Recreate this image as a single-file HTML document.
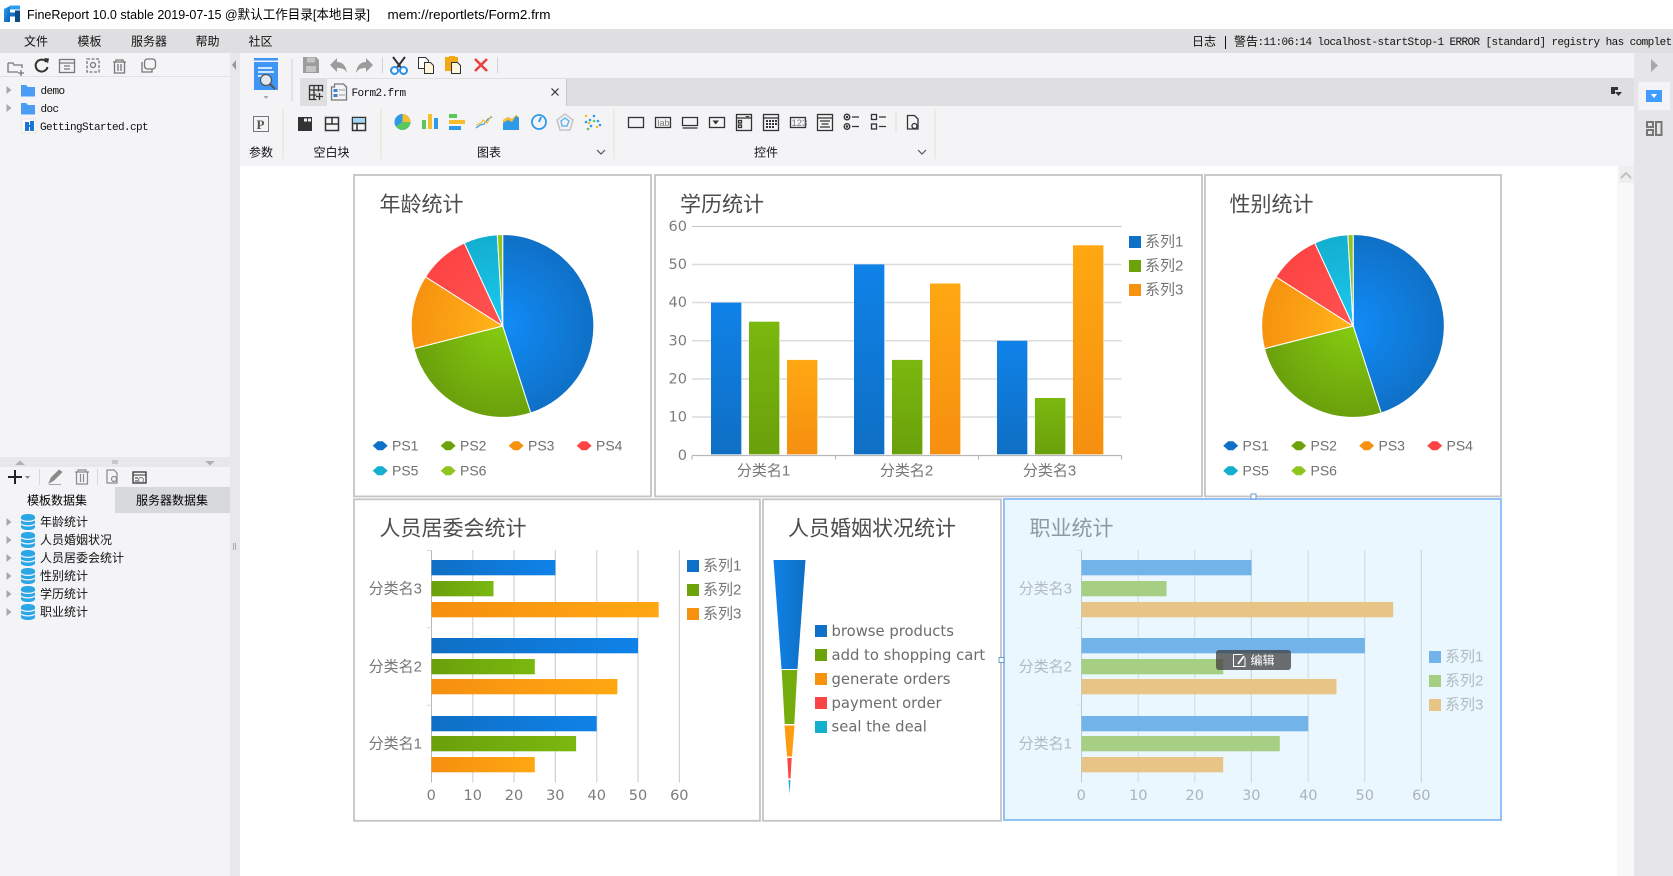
<!DOCTYPE html>
<html lang="zh-CN"><head><meta charset="utf-8"><title>FineReport</title>
<style>
html,body{margin:0;padding:0;width:1673px;height:876px;overflow:hidden;background:#fff}
svg{display:block;position:absolute;left:0;top:0}
text{font-family:"Liberation Sans","Noto Sans CJK SC",sans-serif;fill:#000}
.u{font-size:12px;fill:#111}
.m{font-family:"Liberation Mono","Noto Sans CJK SC",monospace;font-size:11px;letter-spacing:-.6px;fill:#111}
.t{font-size:21px;fill:#4c4c4c}
.l{font-size:15px;fill:#777}
.d{font-family:"DejaVu Sans",sans-serif;font-size:14.5px;fill:#7c7c7c}
.f{font-family:"DejaVu Sans",sans-serif;font-size:14.8px;fill:#6c6c6c}
.s{font-size:14px;fill:#666}
.p{font-size:14px;fill:#707070}
.g{font-size:15px;fill:#b0bbc2}
.gd{font-family:"DejaVu Sans",sans-serif;font-size:14.5px;fill:#a9b4bb}
.i{fill:none;stroke:#333;stroke-width:1.5}
.i2{fill:none;stroke:#777;stroke-width:1.3}
</style></head><body>
<svg width="1673" height="876" viewBox="0 0 1673 876" xmlns="http://www.w3.org/2000/svg">
<defs>
<linearGradient id="lg" x1="0" y1="0" x2="1" y2="1"><stop offset="0" stop-color="#2a9df4"/><stop offset="1" stop-color="#0f5fb0"/></linearGradient>
<radialGradient id="r1" gradientUnits="userSpaceOnUse" cx="0" cy="0" r="91.500"><stop offset="0" stop-color="#118cf8"/><stop offset="1" stop-color="#0f70c6"/></radialGradient>
<radialGradient id="r2" gradientUnits="userSpaceOnUse" cx="0" cy="0" r="91.500"><stop offset="0" stop-color="#86cc10"/><stop offset="1" stop-color="#6aa00c"/></radialGradient>
<radialGradient id="r3" gradientUnits="userSpaceOnUse" cx="0" cy="0" r="91.500"><stop offset="0" stop-color="#ffb51a"/><stop offset="1" stop-color="#f7920f"/></radialGradient>
<radialGradient id="r4" gradientUnits="userSpaceOnUse" cx="0" cy="0" r="91.500"><stop offset="0" stop-color="#ff5252"/><stop offset="1" stop-color="#fd4444"/></radialGradient>
<radialGradient id="r5" gradientUnits="userSpaceOnUse" cx="0" cy="0" r="91.500"><stop offset="0" stop-color="#19caf0"/><stop offset="1" stop-color="#14aecf"/></radialGradient>
<linearGradient id="vb" x1="0" y1="0" x2="0" y2="1"><stop offset="0" stop-color="#0f82e8"/><stop offset="1" stop-color="#0f6fc4"/></linearGradient>
<linearGradient id="vg" x1="0" y1="0" x2="0" y2="1"><stop offset="0" stop-color="#7ab80f"/><stop offset="1" stop-color="#6aa00b"/></linearGradient>
<linearGradient id="vo" x1="0" y1="0" x2="0" y2="1"><stop offset="0" stop-color="#ffa812"/><stop offset="1" stop-color="#f68f10"/></linearGradient>
<linearGradient id="hb" x1="0" y1="0" x2="1" y2="0"><stop offset="0" stop-color="#0f6fc4"/><stop offset="1" stop-color="#0f82e8"/></linearGradient>
<linearGradient id="hg" x1="0" y1="0" x2="1" y2="0"><stop offset="0" stop-color="#6aa00b"/><stop offset="1" stop-color="#7ab80f"/></linearGradient>
<linearGradient id="ho" x1="0" y1="0" x2="1" y2="0"><stop offset="0" stop-color="#f68f10"/><stop offset="1" stop-color="#ffa812"/></linearGradient>
<linearGradient id="fb" x1="0" y1="0" x2="1" y2="0"><stop offset="0" stop-color="#0f82e8"/><stop offset="1" stop-color="#0f6fc4"/></linearGradient>
<g id="pie" stroke="#fff" stroke-width="1">
<path d="M0 0V-91.500A91.500 91.500 0 0 1 28 87Z" fill="url(#r1)"/>
<path d="M0 0L28 87A91.500 91.500 0 0 1 -88.700 22.600Z" fill="url(#r2)"/>
<path d="M0 0L-88.700 22.600A91.500 91.500 0 0 1 -77.200 -49.200Z" fill="url(#r3)"/>
<path d="M0 0L-77.200 -49.200A91.500 91.500 0 0 1 -38.400 -83Z" fill="url(#r4)"/>
<path d="M0 0L-38.400 -83A91.500 91.500 0 0 1 -5.400 -91.300Z" fill="url(#r5)"/>
<path d="M0 0L-5.400 -91.300A91.500 91.500 0 0 1 0 -91.500Z" fill="#8ec51e"/>
</g>
<path id="mk" d="M0 0L5 -4.500H10L15 0L10 4.500H5Z"/>
<g id="db"><path d="M0 3C0 -1 14 -1 14 3V13C14 17 0 17 0 13Z" fill="#2aa7e6"/><path d="M0 5.500C3 8 11 8 14 5.500M0 10C3 12.500 11 12.500 14 10" fill="none" stroke="#f4f4f7" stroke-width="1.200"/></g>
<path id="arr" d="M0 -4L5 0L0 4Z" fill="#a8a8a8"/>
</defs>

<!-- chrome backgrounds -->
<rect x="0" y="29" width="1673" height="24" fill="#dfdfe1"/>
<rect x="0" y="53" width="230" height="823" fill="#f4f4f7"/>
<rect x="230" y="53" width="10" height="823" fill="#e8e8ea"/>
<rect x="240" y="53" width="1394" height="113" fill="#f4f4f7"/>
<rect x="326" y="78" width="1308" height="28" fill="#dfdfe1"/>
<rect x="300" y="78" width="26" height="28" fill="#dfdfe1"/>
<rect x="327" y="79" width="239" height="27" fill="#f4f4f7"/>
<rect x="566" y="79" width="1" height="27" fill="#c8c8c8"/>
<rect x="1634" y="53" width="39" height="823" fill="#e6e6e8"/>
<rect x="1617" y="166" width="17" height="710" fill="#f8f8f9"/>
<rect x="1619" y="166" width="15" height="17" fill="#eeeeef"/>
<path d="M1621 178l5-5 5 5" fill="none" stroke="#c0c0c0" stroke-width="2"/>

<!-- title bar -->
<path d="M4 9L10 6V22H4Z" fill="url(#lg)"/><path d="M10 5.500H20V9.500H10Z" fill="#2a9df4"/><path d="M10 12.500H15V16.500H10Z" fill="#1a70c8"/><path d="M15 10.500H20V22H15Z" fill="#0d4a8a"/>
<text x="27" y="19" font-size="13" fill="#111" textLength="343" lengthAdjust="spacingAndGlyphs">FineReport 10.0 stable 2019-07-15 @默认工作目录[本地目录]</text>
<text x="387.500" y="19" font-size="13" fill="#111" textLength="163" lengthAdjust="spacingAndGlyphs">mem://reportlets/Form2.frm</text>

<!-- menu -->
<text class="u" x="24" y="45.500">文件</text><text class="u" x="77.500" y="45.500">模板</text><text class="u" x="131" y="45.500">服务器</text><text class="u" x="195.500" y="45.500">帮助</text><text class="u" x="248.500" y="45.500">社区</text>
<text class="u" x="1192" y="45.500">日志</text><rect x="1225" y="36" width="1" height="13" fill="#111"/><text class="u" x="1234" y="45.500">警告</text>
<text class="m" x="1257.500" y="45">:11:06:14 localhost-startStop-1 ERROR [standard] registry has complet</text>

<!-- left panel top toolbar -->
<rect x="0" y="76" width="230" height="1" fill="#e2e2e4"/>
<g transform="translate(0,-1)">
<g class="i2" fill="none" stroke="#8a8a8a" stroke-width="1.200">
<path d="M8 64h5l1 2h8v3M8 64v9h10M21 71v6M18 74h6"/>
<rect x="59.500" y="60.500" width="15" height="13"/><path d="M59.500 64h15M64 67h6M64 70h6"/>
<rect x="87" y="60" width="12" height="13" stroke-dasharray="3 1.500"/><circle cx="93" cy="66" r="2.500"/>
<path d="M113 63h13M116 63v-2h7v2M114.500 63v11h10V63M118 65v7M121 65v7"/>
<path d="M142 63v10h10v-3"/><rect x="140.500" y="61" width="11" height="10" rx="3" transform="translate(4,-1)"/>
</g>
<path d="M46.500 63a6 6 0 1 0 1 5" fill="none" stroke="#333" stroke-width="2"/><path d="M44 59l5 .5-1 5z" fill="#333"/>
</g>
<!-- tree -->
<use href="#arr" x="6.500" y="90"/><use href="#arr" x="6.500" y="108"/>
<path d="M21 85h5l2 2h7v9.500H21Z" fill="#4a9cf5"/><path d="M21 103h5l2 2h7v9.500H21Z" fill="#4a9cf5"/>
<text class="m" x="40.500" y="94">demo</text><text class="m" x="40.500" y="112">doc</text>
<rect x="22" y="119" width="14" height="14" fill="#fff" stroke="#e4e4e4"/><path d="M25 122h4v9h-4ZM30 121h4v10h-4Z" fill="#1a76d2"/><rect x="29" y="125" width="2" height="2" fill="#1a76d2"/>
<text class="m" x="40" y="130">GettingStarted.cpt</text>
<!-- splitter -->
<rect x="0" y="457" width="230" height="10" fill="#e8e8ea"/>
<path d="M15 465l5-4.500 5 4.500Z M205 461l5 4.500 5-4.500Z" fill="#b0b0b0"/>
<path d="M112 461h6M112 463h6" stroke="#aaa" stroke-width="1"/>
<path d="M8 477h14M15 470v14" stroke="#222" stroke-width="2"/><path d="M25 476h5l-2.500 3z" fill="#888"/>
<rect x="39" y="469" width="1" height="16" fill="#d8d8d8"/><rect x="97" y="469" width="1" height="16" fill="#d8d8d8"/>
<path d="M49 483l2-5 8-8 3 2-8 8ZM49 484.500h12" fill="#8a8a8a" stroke="#8a8a8a" stroke-width=".8"/>
<g fill="none" stroke="#8a8a8a" stroke-width="1.200"><path d="M75 472h14M78 472v-2h8v2M76.500 472v12h11v-12M80.500 474v8M83.500 474v8"/>
<path d="M107 470h7l3 3v10h-10Z"/><circle cx="114" cy="479" r="2.500"/></g>
<rect x="133" y="472" width="13" height="11" fill="none" stroke="#333" stroke-width="1.300"/><path d="M133 475h13M135 478h3M135 481h3" stroke="#333"/><circle cx="141" cy="480" r="2.500" fill="none" stroke="#777"/>
<!-- tabs -->
<rect x="115" y="487" width="115" height="26" fill="#d8d9dd"/>
<text x="27" y="504.500" font-size="12" fill="#111">模板数据集</text><text x="136" y="504.500" font-size="12" fill="#111">服务器数据集</text>
<g>
<use href="#arr" x="6.500" y="522"/><use href="#arr" x="6.500" y="540"/><use href="#arr" x="6.500" y="558"/><use href="#arr" x="6.500" y="576"/><use href="#arr" x="6.500" y="594"/><use href="#arr" x="6.500" y="612"/>
<use href="#db" x="21" y="514"/><use href="#db" x="21" y="532"/><use href="#db" x="21" y="550"/><use href="#db" x="21" y="568"/><use href="#db" x="21" y="586"/><use href="#db" x="21" y="604"/>
</g>
<text class="u" x="40" y="526">年龄统计</text><text class="u" x="40" y="544">人员婚姻状况</text><text class="u" x="40" y="562">人员居委会统计</text><text class="u" x="40" y="580">性别统计</text><text class="u" x="40" y="598">学历统计</text><text class="u" x="40" y="616">职业统计</text>
<path d="M232 65l4-5v10Z" fill="#999"/>
<path d="M233.500 543v7M235.500 543v7" stroke="#aaa"/>

<!-- top toolbar -->
<path d="M254 58h24v2.500h-24Z" fill="#3f96f5"/><path d="M254 62h24v28H254Z" fill="#3f96f5"/><path d="M258 68h14M258 72h16M258 76h8" stroke="#fff" stroke-width="1.500"/>
<circle cx="266" cy="80" r="5.500" fill="#dfeaf4" stroke="#555" stroke-width="1.200"/><path d="M270 84l5 5" stroke="#555" stroke-width="2"/>
<path d="M263.500 96h5l-2.500 3Z" fill="#aaa"/>
<rect x="291.500" y="59" width="1" height="42" fill="#d4d4d4"/>
<path d="M303 57h13l3 3v13h-16Z" fill="#9c9c9c"/><rect x="307" y="57.500" width="8" height="5" fill="#c4c4c4"/><rect x="306" y="66" width="10" height="6" fill="#c4c4c4"/>
<path d="M330 65l7-7v4c5 0 9 3 10 11-2-4-5-5-10-5v4Z" fill="#9c9c9c"/>
<path d="M373 65l-7-7v4c-5 0-9 3-10 11 2-4 5-5 10-5v4Z" fill="#9c9c9c"/>
<rect x="382" y="57" width="1" height="16" fill="#d4d4d4"/>
<path d="M393 57l9 12M405 57l-9 12" stroke="#333" stroke-width="2"/><circle cx="394.500" cy="70.500" r="3.500" fill="#fff" stroke="#2e8fe8" stroke-width="2"/><circle cx="403.500" cy="70.500" r="3.500" fill="#fff" stroke="#2e8fe8" stroke-width="2"/>
<path d="M418.500 57.500h7l3 3v8h-10Z" fill="#fff" stroke="#333"/><path d="M424.500 62.500h6l3 3v8h-9Z" fill="#fdf5dc" stroke="#333"/>
<path d="M445 57h4v-1h6v1h3v14h-13Z" fill="#f2a915"/><path d="M451.500 62.500h6l3 3v8h-9Z" fill="#fdf5dc" stroke="#333"/>
<path d="M475 59l12 12M487 59l-12 12" stroke="#ea4040" stroke-width="2.600"/>
<rect x="497" y="57" width="1" height="16" fill="#d4d4d4"/>
<!-- tab row -->
<g fill="none" stroke="#333" stroke-width="1.300"><path d="M309.500 85.500h13v6M309.500 85.500v14h7M309.500 90h13M309.500 95h7M314 85.500v14M318.500 85.500v6M319.500 93v7M316 96.500h7"/>
<path d="M331.500 87h3v-3h9l3 3v13h-15Z" stroke="#777"/></g>
<path d="M333.500 89h4v3h-4zM333.500 94h4v3h-4z" fill="#3f80d0"/><path d="M339 90h6M339 95h6" stroke="#999" stroke-width="1"/>
<text class="m" x="351.500" y="96">Form2.frm</text>
<path d="M551.500 88.500l7 7M558.500 88.500l-7 7" stroke="#333" stroke-width="1.200"/>
<path d="M1611 87h7v3h-3v4h-4Z" fill="#333"/><path d="M1615 92h7l-3.500 4Z" fill="#333"/>
<!-- toolbar 2 -->
<rect x="253.500" y="116.500" width="15" height="15" fill="none" stroke="#777"/><text x="256.500" y="129" style="font-family:'Liberation Serif',serif;font-weight:bold;font-size:13px;fill:#555">P</text>
<rect x="282" y="109" width="2" height="50" fill="#ecebe1"/><rect x="380" y="109" width="2" height="50" fill="#ecebe1"/><rect x="613" y="109" width="2" height="50" fill="#ecebe1"/><rect x="895" y="112" width="2" height="20" fill="#ecebe1"/><rect x="934" y="109" width="2" height="50" fill="#ecebe1"/>
<rect x="298" y="117" width="14" height="14" fill="#333"/><rect x="304" y="118.500" width="3" height="3" fill="#f4f4f7"/><rect x="308" y="118.500" width="3" height="3" fill="#f4f4f7"/>
<g class="i"><rect x="325.500" y="117.500" width="13" height="13"/><path d="M325.500 124h13M332 117.500v6.500"/>
<rect x="352.500" y="117.500" width="13" height="13"/></g><rect x="353" y="118" width="12" height="5" fill="#a5d6f5"/><path d="M352.500 123.500h13M357 123.500v7" fill="none" stroke="#333" stroke-width="1.500"/>
<text class="u" x="249" y="156.500">参数</text><text class="u" x="313.500" y="156.500">空白块</text><text class="u" x="477" y="156.500">图表</text><text class="u" x="754" y="156.500">控件</text>
<path d="M597 150l4 4 4-4M918 150l4 4 4-4" fill="none" stroke="#555" stroke-width="1.200"/>
<!-- chart icons -->
<circle cx="402.500" cy="122" r="8" fill="#2e9ae8"/><path d="M402.500 122V114A8 8 0 0 1 410.500 122Z" fill="#f7bd2f"/><path d="M402.500 122H410.500A8 8 0 0 1 396 126.500Z" fill="#5cc85c"/>
<rect x="422" y="120" width="4" height="9" fill="#5cc85c"/><rect x="428" y="114" width="4" height="15" fill="#f7bd2f"/><rect x="434" y="118" width="4" height="11" fill="#2e9ae8"/>
<rect x="449" y="114" width="8" height="4" fill="#5cc85c"/><rect x="449" y="120" width="16" height="4" fill="#f7bd2f"/><rect x="449" y="126" width="12" height="4" fill="#2e9ae8"/>
<path d="M476 128l4-3 4-1 4-5 4-2" fill="none" stroke="#2e9ae8" stroke-width="1.200"/><path d="M476 125l5-2 2-3 4 3 4-7" fill="none" stroke="#f7bd2f" stroke-width="1.200"/>
<path d="M503 120l5-3 4 2 4-4 3 2V130H503Z" fill="#2e9ae8"/><path d="M503 120l5-3 4 2 4-4 3 2V118l-3-2-4 6-4-2-5 3Z" fill="#f7bd2f"/>
<circle cx="539" cy="122" r="7" fill="none" stroke="#2e9ae8" stroke-width="1.800"/><path d="M539 122l2-5" stroke="#2e9ae8" stroke-width="2"/>
<path d="M565 114l8 6-3 10h-10l-3-10Z" fill="none" stroke="#c4c4c4" stroke-width="1.500"/><path d="M565 118l4 3-2 5h-5l-1-5Z" fill="none" stroke="#6ab8ec" stroke-width="1.500"/>
<g fill="#2e9ae8"><circle cx="590" cy="120" r="1.300"/><circle cx="598" cy="121" r="1.300"/><circle cx="594" cy="116" r="1.300"/><circle cx="586" cy="122" r="1.300"/><circle cx="600" cy="125" r="1.300"/><circle cx="591" cy="126" r="1.300"/></g><g fill="#f7bd2f"><circle cx="586" cy="116" r="1.300"/><circle cx="589" cy="123" r="1.300"/><circle cx="597" cy="127" r="1.300"/></g><g fill="#5cc85c"><circle cx="594" cy="121" r="1.300"/><circle cx="588" cy="129" r="1.300"/></g>
<!-- control icons -->
<g class="i" style="stroke-width:1.300">
<rect x="628.500" y="117.500" width="15" height="10"/>
<rect x="655.500" y="117.500" width="15" height="10"/>
<path d="M682.500 117.500h15v8h-15ZM682.500 128h15"/>
<rect x="709.500" y="117.500" width="15" height="10"/>
<rect x="736.500" y="114.500" width="15" height="16"/><path d="M736.500 118h15"/><rect x="738.500" y="120.500" width="3" height="2.500"/><rect x="738.500" y="125" width="3" height="2.500"/>
<rect x="763.500" y="114.500" width="15" height="16"/><path d="M763.500 118h15"/>
<rect x="790.500" y="117.500" width="15" height="10"/>
<rect x="817.500" y="114.500" width="15" height="16"/><path d="M817.500 118h15M820 121h10M821.500 124h7M820 127h10"/>
<circle cx="847" cy="117" r="2.800"/><circle cx="847" cy="126.500" r="2.800"/><path d="M852 117h7M852 126.500h7"/>
<rect x="871.500" y="114.500" width="5" height="5"/><rect x="871.500" y="124" width="5" height="5"/><path d="M879 117h7M879 126.500h7"/>
<path d="M907.500 115.500h7l3.500 3.500v10h-10.500Z"/><circle cx="914.500" cy="126" r="2.500"/>
</g>
<path d="M719 120.500h-6.500l3.250 4Z" fill="#333"/>
<path d="M745 116h5l-2.500 1.500Z" fill="#333"/>
<g fill="#333"><rect x="766" y="120" width="2" height="2"/><rect x="769" y="120" width="2" height="2"/><rect x="772" y="120" width="2" height="2"/><rect x="775" y="120" width="2" height="2"/><rect x="766" y="123" width="2" height="2"/><rect x="769" y="123" width="2" height="2"/><rect x="772" y="123" width="2" height="2"/><rect x="775" y="123" width="2" height="2"/><rect x="766" y="126" width="2" height="2"/><rect x="769" y="126" width="2" height="2"/><rect x="772" y="126" width="2" height="2"/><circle cx="847" cy="117" r="1.300"/><circle cx="847" cy="126.500" r="1.300"/></g>
<text x="657.500" y="126" style="font-size:9px;fill:#777">lab</text><text x="791.500" y="126" style="font-size:9.500px;fill:#777">123</text>
<!-- right sidebar -->
<path d="M1651 59l7 6.500-7 6.500Z" fill="#a8a8a8"/>
<rect x="1638.500" y="82" width="31.500" height="28" fill="#f4f4f7"/>
<rect x="1646" y="90" width="16" height="12" fill="#3f9dff"/><path d="M1651 94h6l-3 4Z" fill="#fff"/>
<g fill="none" stroke="#777" stroke-width="2"><rect x="1647" y="122" width="6" height="5"/><rect x="1647" y="130" width="6" height="5"/><rect x="1656" y="122" width="5.500" height="13"/></g>

<!-- card 1 -->
<rect x="354" y="175" width="297" height="321.400" fill="#fff" stroke="#c4c4c4" stroke-width="1.800"/>
<text class="t" x="379.500" y="211.500">年龄统计</text>
<use href="#pie" x="502.700" y="326"/>
<use href="#mk" x="372.700" y="445.700" fill="#0f70c8"/><text class="p" x="392" y="450.700">PS1</text>
<use href="#mk" x="440.700" y="445.700" fill="#6ca30b"/><text class="p" x="460" y="450.700">PS2</text>
<use href="#mk" x="508.700" y="445.700" fill="#f7920f"/><text class="p" x="528" y="450.700">PS3</text>
<use href="#mk" x="576.700" y="445.700" fill="#fd4444"/><text class="p" x="596" y="450.700">PS4</text>
<use href="#mk" x="372.700" y="470.700" fill="#14aecf"/><text class="p" x="392" y="475.700">PS5</text>
<use href="#mk" x="440.700" y="470.700" fill="#8ec51e"/><text class="p" x="460" y="475.700">PS6</text>

<!-- card 2 -->
<rect x="655" y="175" width="547" height="321.400" fill="#fff" stroke="#c4c4c4" stroke-width="1.800"/>
<text class="t" x="680" y="211.500">学历统计</text>
<path d="M692 226.500H1121.500" stroke="#c4c4c4" stroke-width="1"/>
<path d="M692 264.500H1121.500M692 302.500H1121.500M692 340.700H1121.500M692 379H1121.500M692 417H1121.500" stroke="#dcdcdc" stroke-width="1.500"/>
<path d="M692 455.500H1121.500M692 455.500v4M835.500 455.500v4M978.500 455.500v4M1121.500 455.500v4" stroke="#b8b8b8" fill="none" stroke-width="1.200"/>
<g fill="url(#vb)"><rect x="711" y="302.600" width="30" height="151.700"/><rect x="854" y="264.400" width="30" height="189.900"/><rect x="997" y="340.800" width="30" height="113.500"/></g>
<g fill="url(#vg)"><rect x="749" y="321.700" width="30" height="132.600"/><rect x="892" y="359.900" width="30" height="94.400"/><rect x="1035" y="398" width="30" height="56.300"/></g>
<g fill="url(#vo)"><rect x="787" y="359.900" width="30" height="94.400"/><rect x="930" y="283.500" width="30" height="170.800"/><rect x="1073" y="245.300" width="30" height="209"/></g>
<path d="M741.500 302.600V454.300M884.500 264.400V454.300M1027.500 340.800V454.300" stroke="#a8d0f5"/><path d="M779.500 321.700V454.300M922.500 359.900V454.300M1065.500 398V454.300" stroke="#c8e49c"/><path d="M817.500 359.900V454.300M960.500 283.500V454.300M1103.500 245.300V454.300" stroke="#fbdc9f"/>
<g text-anchor="end"><text class="d" x="687" y="231">60</text><text class="d" x="687" y="269">50</text><text class="d" x="687" y="307">40</text><text class="d" x="687" y="345.500">30</text><text class="d" x="687" y="383.500">20</text><text class="d" x="687" y="421.500">10</text><text class="d" x="687" y="460">0</text></g>
<g text-anchor="middle"><text class="l" x="763.500" y="475.500">分类名1</text><text class="l" x="906.500" y="475.500">分类名2</text><text class="l" x="1049.500" y="475.500">分类名3</text></g>
<rect x="1129" y="236" width="12" height="12" fill="#0f70c8"/><rect x="1129" y="260" width="12" height="12" fill="#6ca30b"/><rect x="1129" y="284" width="12" height="12" fill="#f7920f"/>
<text class="l" x="1145" y="246.500">系列1</text><text class="l" x="1145" y="270.500">系列2</text><text class="l" x="1145" y="294.500">系列3</text>

<!-- card 3 -->
<rect x="1205" y="175" width="296" height="321.400" fill="#fff" stroke="#c4c4c4" stroke-width="1.800"/>
<text class="t" x="1229.500" y="211.500">性别统计</text>
<use href="#pie" x="1353.200" y="326"/>
<use href="#mk" x="1223.200" y="445.700" fill="#0f70c8"/><text class="p" x="1242.500" y="450.700">PS1</text>
<use href="#mk" x="1291.200" y="445.700" fill="#6ca30b"/><text class="p" x="1310.500" y="450.700">PS2</text>
<use href="#mk" x="1359.200" y="445.700" fill="#f7920f"/><text class="p" x="1378.500" y="450.700">PS3</text>
<use href="#mk" x="1427.200" y="445.700" fill="#fd4444"/><text class="p" x="1446.500" y="450.700">PS4</text>
<use href="#mk" x="1223.200" y="470.700" fill="#14aecf"/><text class="p" x="1242.500" y="475.700">PS5</text>
<use href="#mk" x="1291.200" y="470.700" fill="#8ec51e"/><text class="p" x="1310.500" y="475.700">PS6</text>

<!-- card 4 -->
<rect x="354" y="499.300" width="406" height="321.500" fill="#fff" stroke="#c4c4c4" stroke-width="1.800"/>
<text class="t" x="379.500" y="535.500">人员居委会统计</text>
<path d="M472.700 550V782.500M514 550V782.500M596.700 550V782.500M638 550V782.500" stroke="#dcdcdc" stroke-width="1.500"/>
<path d="M555.300 550V782.500M679.300 550V782.500" stroke="#c6c6c6"/>
<path d="M431.500 550V782.500" stroke="#b8b8b8" fill="none"/><path d="M427 550.500H431.500M427 627.700H431.500M427 705.300H431.500" stroke="#d8d8d8" fill="none"/>
<g fill="url(#hb)"><rect x="431.500" y="560" width="123.900" height="15.300"/><rect x="431.500" y="638" width="206.500" height="15.300"/><rect x="431.500" y="716" width="165.200" height="15.300"/></g>
<g fill="url(#hg)"><rect x="431.500" y="581" width="62" height="15.300"/><rect x="431.500" y="659" width="103.300" height="15.300"/><rect x="431.500" y="736" width="144.600" height="15.300"/></g>
<g fill="url(#ho)"><rect x="431.500" y="602" width="227.200" height="15.300"/><rect x="431.500" y="679" width="185.900" height="15.300"/><rect x="431.500" y="757" width="103.300" height="15.300"/></g>
<g text-anchor="end"><text class="l" x="422" y="593.500">分类名3</text><text class="l" x="422" y="671.500">分类名2</text><text class="l" x="422" y="748.500">分类名1</text></g>
<g text-anchor="middle"><text class="d" x="431.300" y="800">0</text><text class="d" x="472.700" y="800">10</text><text class="d" x="514" y="800">20</text><text class="d" x="555.300" y="800">30</text><text class="d" x="596.700" y="800">40</text><text class="d" x="638" y="800">50</text><text class="d" x="679.300" y="800">60</text></g>
<rect x="687" y="560" width="12" height="12" fill="#0f70c8"/><rect x="687" y="584" width="12" height="12" fill="#6ca30b"/><rect x="687" y="608" width="12" height="12" fill="#f7920f"/>
<text class="l" x="703" y="570.500">系列1</text><text class="l" x="703" y="594.500">系列2</text><text class="l" x="703" y="618.500">系列3</text>

<!-- card 5 -->
<rect x="763" y="499.300" width="238" height="321.500" fill="#fff" stroke="#c4c4c4" stroke-width="1.800"/>
<text class="t" x="788" y="535.500">人员婚姻状况统计</text>
<path d="M773.500 560H805.500L797.500 669H781.500Z" fill="url(#fb)"/>
<path d="M781.700 670H797.300L794.300 724H784.700Z" fill="#74ad0d"/>
<path d="M784.500 725.500H794.500L792 756.500H787Z" fill="#fd9c10"/>
<path d="M787.300 758H791.700L790.500 778.500H788.500Z" fill="#fd4444"/>
<path d="M788.500 780H790.500L789.500 794Z" fill="#14aecf"/>
<rect x="815" y="625" width="12" height="12" fill="#0f70c8"/><rect x="815" y="649" width="12" height="12" fill="#6ca30b"/><rect x="815" y="673" width="12" height="12" fill="#f7920f"/><rect x="815" y="697" width="12" height="12" fill="#fd4444"/><rect x="815" y="721" width="12" height="12" fill="#14aecf"/>
<text class="f" x="831.500" y="636">browse products</text><text class="f" x="831.500" y="660">add to shopping cart</text><text class="f" x="831.500" y="684">generate orders</text><text class="f" x="831.500" y="708">payment order</text><text class="f" x="831.500" y="731.500">seal the deal</text>

<!-- card 6 selected -->
<rect x="1004" y="499" width="497" height="321" fill="#eaf7fe" stroke="#90c2f8" stroke-width="2"/>
<text class="t" x="1029.500" y="535.500" style="fill:#8b9aa3">职业统计</text>
<path d="M1138.300 550V782.500M1194.700 550V782.500M1308.300 550V782.500M1364.700 550V782.500" stroke="#d6e4ea" stroke-width="1.500"/>
<path d="M1251.300 550V782.500M1421.300 550V782.500" stroke="#c5d2d9"/>
<path d="M1081.500 550V782.500" stroke="#bccad1" fill="none"/><path d="M1077 550.500H1081.500M1077 627.700H1081.500M1077 705.300H1081.500" stroke="#d6e4ea" fill="none"/>
<g fill="#72b3ea"><rect x="1081.500" y="560" width="170" height="15.300"/><rect x="1081.500" y="638" width="283.400" height="15.300"/><rect x="1081.500" y="716" width="226.700" height="15.300"/></g>
<g fill="#a6cf83"><rect x="1081.500" y="581" width="85" height="15.300"/><rect x="1081.500" y="659" width="141.700" height="15.300"/><rect x="1081.500" y="736" width="198.300" height="15.300"/></g>
<g fill="#e8c586"><rect x="1081.500" y="602" width="311.700" height="15.300"/><rect x="1081.500" y="679" width="255" height="15.300"/><rect x="1081.500" y="757" width="141.700" height="15.300"/></g>
<g text-anchor="end"><text class="g" x="1072" y="593.500">分类名3</text><text class="g" x="1072" y="671.500">分类名2</text><text class="g" x="1072" y="748.500">分类名1</text></g>
<g text-anchor="middle"><text class="gd" x="1081.300" y="800">0</text><text class="gd" x="1138.300" y="800">10</text><text class="gd" x="1194.700" y="800">20</text><text class="gd" x="1251.300" y="800">30</text><text class="gd" x="1308.300" y="800">40</text><text class="gd" x="1364.700" y="800">50</text><text class="gd" x="1421.300" y="800">60</text></g>
<rect x="1429" y="651" width="12" height="12" fill="#72b3ea"/><rect x="1429" y="675" width="12" height="12" fill="#a6cf83"/><rect x="1429" y="699" width="12" height="12" fill="#e8c586"/>
<text class="g" x="1445" y="661.500">系列1</text><text class="g" x="1445" y="685.500">系列2</text><text class="g" x="1445" y="709.500">系列3</text>
<!-- edit tooltip -->
<rect x="1216" y="650" width="75" height="20" rx="3" fill="#3f3f3f" fill-opacity=".75"/>
<path d="M1233.500 654.500h9M1233.500 654.500v12h11.500v-9" fill="none" stroke="#fff" stroke-width="1"/><path d="M1238 664l6-8" stroke="#fff" stroke-width="1.800"/>
<text x="1250.500" y="664.500" style="font-size:12px;fill:#fff">编辑</text>
<!-- handles -->
<rect x="1251" y="494" width="5" height="5" fill="#fff" stroke="#6a9cc9"/><rect x="999" y="657.500" width="5" height="5" fill="#fff" stroke="#6a9cc9"/>
</svg>
</body></html>
